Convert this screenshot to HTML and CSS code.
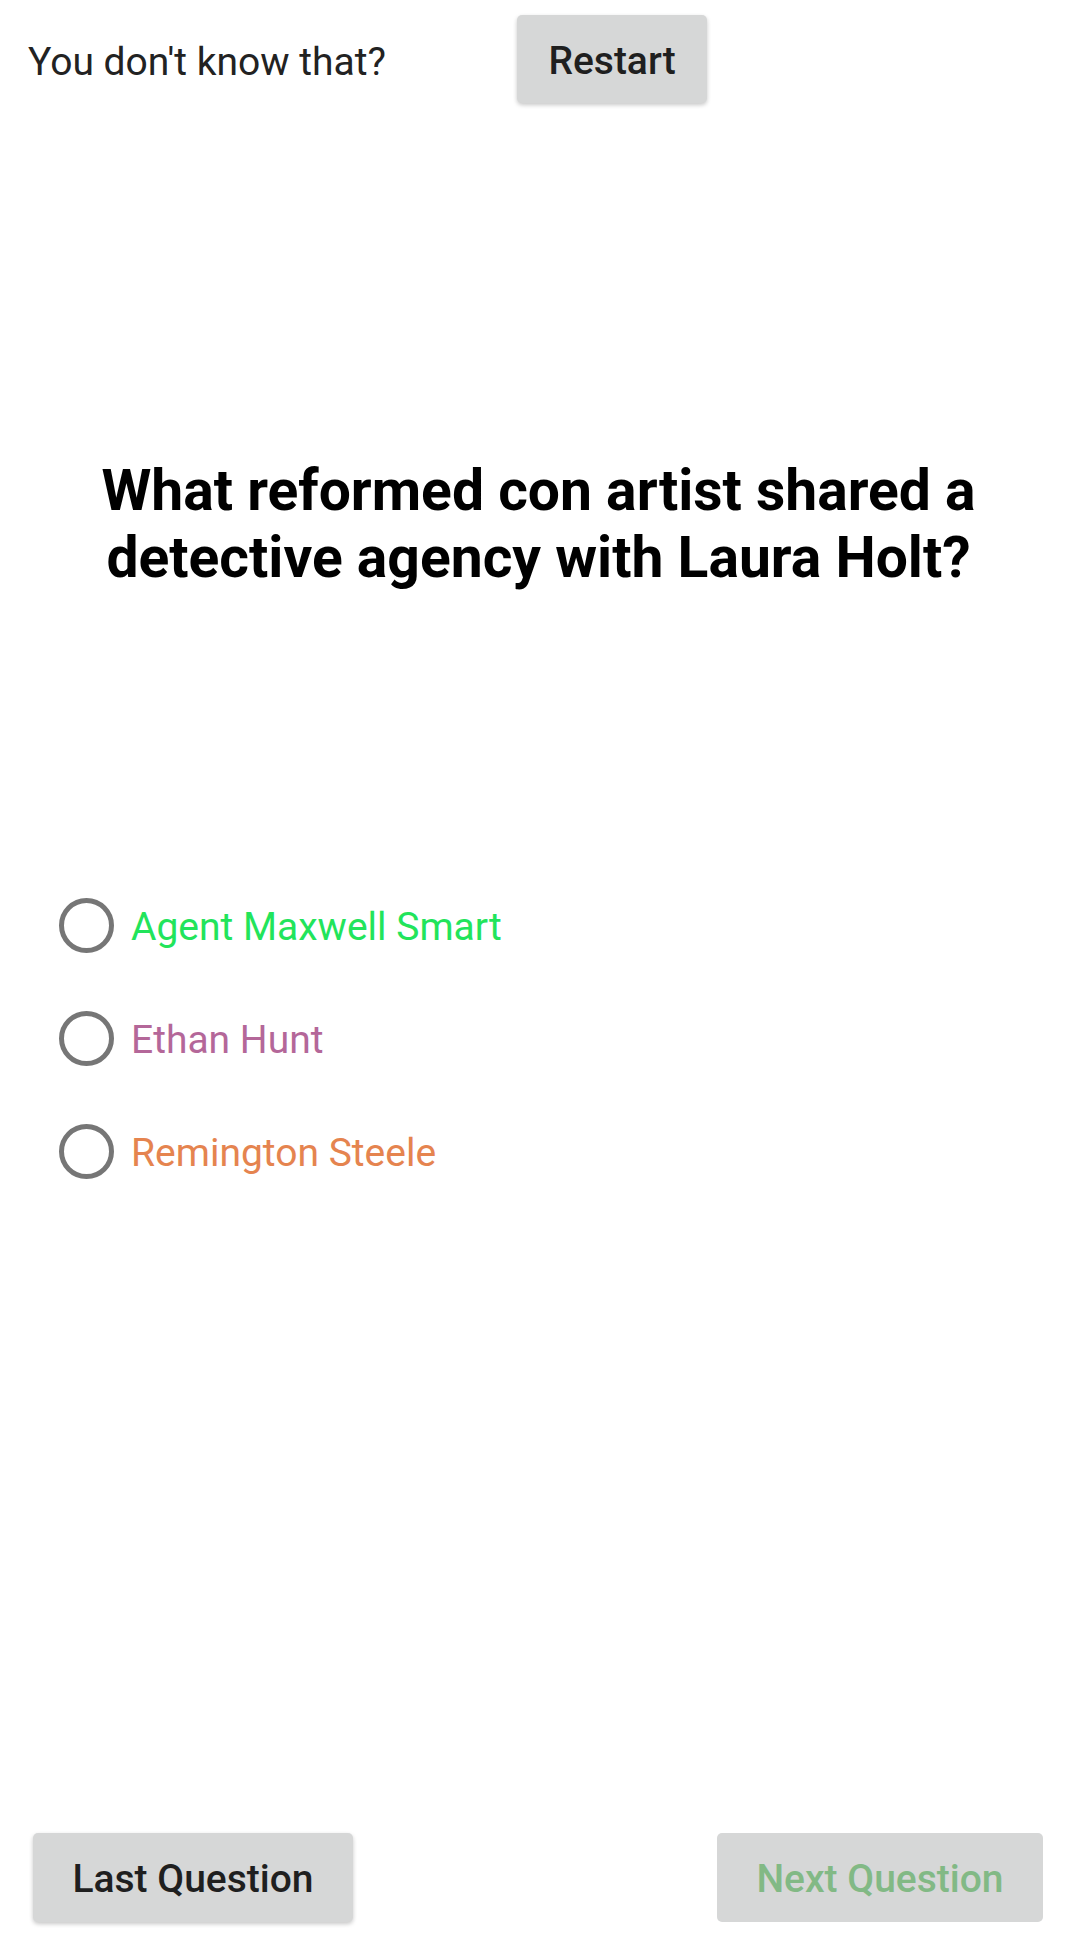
FILE: index.html
```html
<!DOCTYPE html>
<html>
<head>
<meta charset="utf-8">
<link rel="stylesheet" href="styles.css">
</head>
<body>
<div class="screen">
  <div class="top">
    <span class="status">You don't know that?</span>
    <button class="btn raised">Restart</button>
  </div>
  <h1 class="question">What reformed con artist shared a detective agency with Laura Holt?</h1>
  <div class="options">
    <label class="option"><span class="radio"></span><span class="opt green">Agent Maxwell Smart</span></label>
    <label class="option"><span class="radio"></span><span class="opt purple">Ethan Hunt</span></label>
    <label class="option"><span class="radio"></span><span class="opt orange">Remington Steele</span></label>
  </div>
  <div class="nav">
    <button class="btn raised nav-btn">Last Question</button>
    <button class="btn nav-btn disabled">Next Question</button>
  </div>
</div>
</body>
</html>
```

FILE: styles.css
```css
html, body {
  margin: 0;
  padding: 0;
  background: #ffffff;
}
.screen {
  height: 1959px;
  display: flex;
  flex-direction: column;
  font-family: Roboto, "Noto Sans", sans-serif;
  box-sizing: border-box;
  padding-bottom: 37px;
}
.top {
  display: flex;
  align-items: center;
  padding: 15px 0 0 28px;
}
.status {
  width: 489px;
  padding-top: 5px;
  font-size: 39px;
  color: #222222;
}
.btn {
  font-family: Roboto, "Noto Sans", sans-serif;
  font-weight: 500;
  font-size: 39px;
  color: #1f1f1f;
  background: #d6d7d7;
  border: none;
  border-radius: 5px;
  height: 88px;
  padding: 3px 0 0;
  margin: 0;
}
.raised {
  box-shadow: 0 2px 4px rgba(0, 0, 0, 0.22);
}
.top .btn {
  width: 190px;
}
.question {
  margin: 354px 50px 0;
  font-size: 57px;
  line-height: 67px;
  font-weight: 700;
  text-align: center;
  color: #000000;
}
.options {
  margin-top: 278px;
  padding-left: 59px;
  display: flex;
  flex-direction: column;
}
.option {
  height: 113px;
  display: flex;
  align-items: center;
  gap: 17px;
}
.radio {
  width: 55px;
  height: 55px;
  box-sizing: border-box;
  border: 5px solid #767676;
  border-radius: 50%;
}
.opt {
  font-size: 39px;
  padding-top: 2px;
}
.green { color: #22e45b; }
.purple { color: #b46799; }
.orange { color: #e5844f; }
.nav {
  margin-top: auto;
  display: flex;
  justify-content: space-between;
  padding: 0 34px 0 33px;
}
.nav-btn {
  width: 320px;
  height: 89px;
}
.nav-btn.disabled {
  width: 326px;
  color: #82b985;
}
```
